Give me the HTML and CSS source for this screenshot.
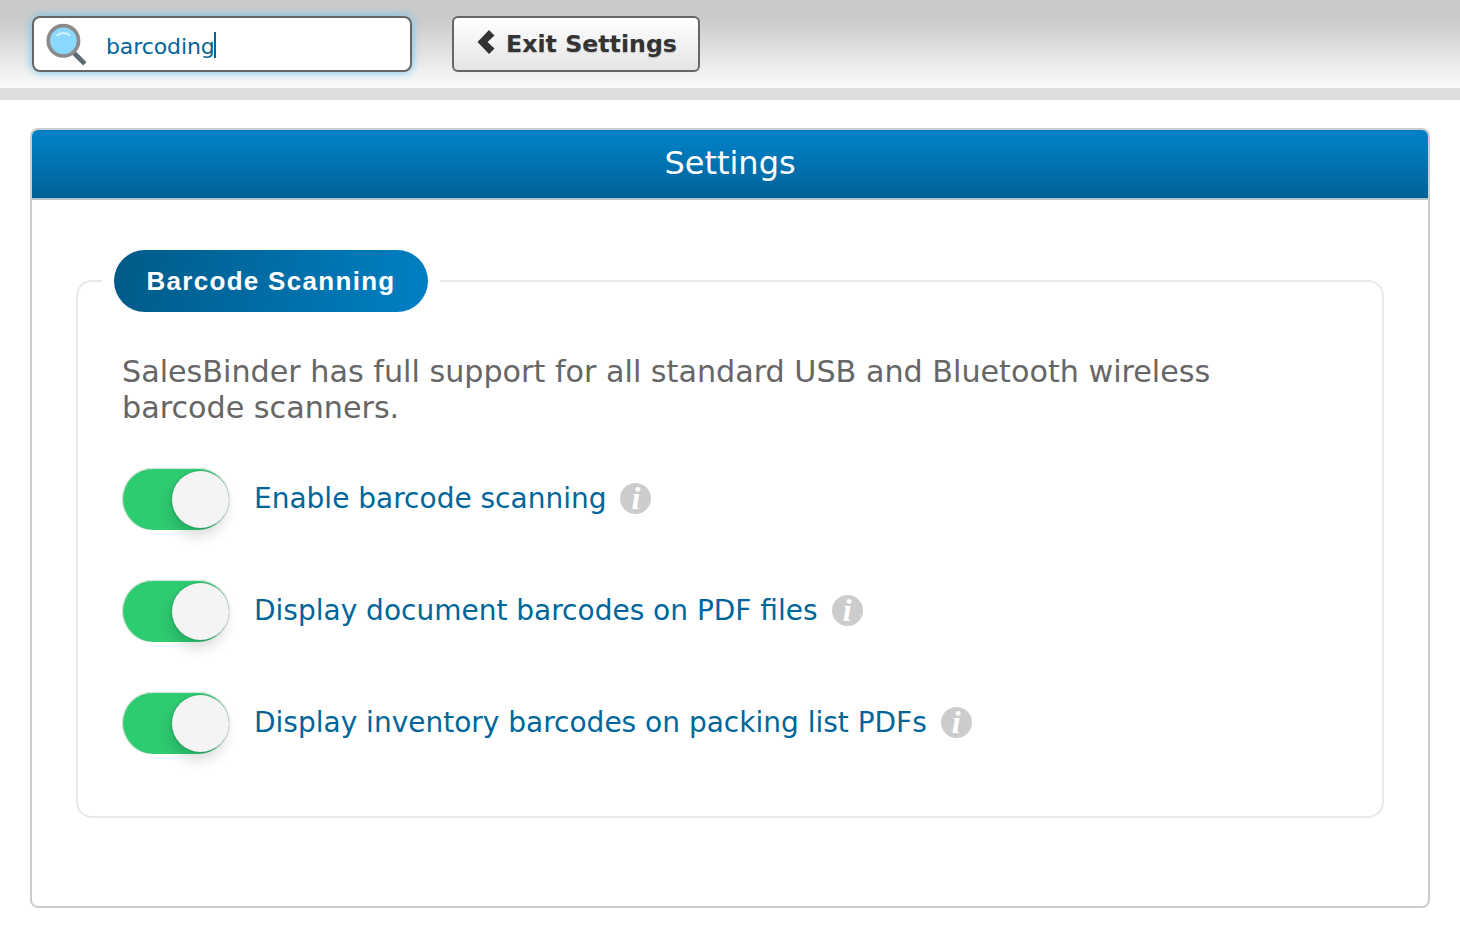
FILE: index.html
```html
<!DOCTYPE html>
<html lang="en">
<head>
<meta charset="utf-8">
<title>Settings</title>
<link rel="stylesheet" href="styles.css">
</head>
<body>
<header class="topbar">
  <div class="search">
    <svg class="search-icon" width="44" height="44" viewBox="0 0 42 42">
      <path d="M27 27 L39 39" stroke="#5b6a70" stroke-width="4.500" fill="none"/>
      <circle cx="18.500" cy="17" r="14.500" fill="#8bd8ff" stroke="#8a8a8a" stroke-width="3.500"/>
      <path d="M12 12 Q18.500 7 25 12" stroke="#d6f1ff" stroke-width="2" fill="none"/>
    </svg>
    <span class="search-text">barcoding</span><span class="caret"></span>
  </div>
  <a class="exit">
    <svg class="chevron" width="18" height="26" viewBox="0 0 18 26"><path d="M12 1 L17.500 6.500 L10.500 13 L17.500 19.500 L12 25 L0.500 13 Z" fill="#333"/></svg>
    <span>Exit Settings</span>
  </a>
</header>
<main class="panel">
  <h1 class="panel-title">Settings</h1>
  <div class="panel-body">
    <fieldset class="group">
      <legend class="group-legend"><span class="pill">Barcode Scanning</span></legend>
      <p class="intro">SalesBinder has full support for all standard USB and Bluetooth wireless barcode scanners.</p>
      <div class="row">
        <span class="toggle"><span class="knob"></span></span>
        <span class="label">Enable barcode scanning</span>
        <span class="info">i</span>
      </div>
      <div class="row">
        <span class="toggle"><span class="knob"></span></span>
        <span class="label">Display document barcodes on PDF files</span>
        <span class="info">i</span>
      </div>
      <div class="row">
        <span class="toggle"><span class="knob"></span></span>
        <span class="label">Display inventory barcodes on packing list PDFs</span>
        <span class="info">i</span>
      </div>
    </fieldset>
  </div>
</main>
</body>
</html>
```
FILE: styles.css
```css
* { box-sizing: border-box; }
html, body { margin: 0; padding: 0; background: #fff; }
body {
  height: 928px;
  overflow: hidden;
  font-family: "DejaVu Sans", Verdana, sans-serif;
}
.topbar {
  height: 100px;
  display: flex;
  gap: 40px;
  padding: 16px 32px 0;
  background: linear-gradient(#c9c9c9 0, #cbcbcb 20px, #fafafa 86px);
  border-bottom: 12px solid #dedede;
}
.search {
  width: 380px;
  height: 56px;
  display: flex;
  align-items: center;
  background: #fff;
  border: 2px solid #666;
  border-radius: 8px;
  box-shadow: 0 0 10px #6cc0ee;
  padding-left: 10px;
}
.search-icon { flex: none; margin-top: 2px; }
.search-text {
  margin-left: 18px;
  margin-top: 4px;
  font-size: 22px;
  letter-spacing: -0.1px;
  color: #006699;
}
.caret { width: 2px; height: 26px; background: #006699; margin-top: 2px; margin-left: -1px; }
.exit {
  width: 248px;
  height: 56px;
  display: flex;
  align-items: center;
  padding: 0 0 0 24px;
  gap: 11px;
  border: 2px solid #666;
  border-radius: 6px;
  background: linear-gradient(#fff, #e4e4e4);
  color: #333;
  font-size: 23.700px;
  font-weight: bold;
  text-shadow: 0 1px 1px rgba(0,0,0,.2);
}
.exit span { margin-top: -1px; }
.chevron { flex: none; margin-top: -5px; margin-left: -1px; }
.panel {
  width: 1400px;
  height: 780px;
  margin: 28px 0 0 30px;
  border: 2px solid #ccc;
  border-radius: 8px;
  overflow: hidden;
}
.panel-title {
  margin: 0;
  height: 70px;
  line-height: 66px;
  text-align: center;
  font-size: 32px;
  font-weight: normal;
  color: #fff;
  background: linear-gradient(#0080c4 0, #0080c4 8px, #006298 68px);
  border-bottom: 2px solid #b4c3cc;
}
.panel-body { padding: 50px 44px 0; }
.group {
  margin: 0;
  height: 568px;
  padding: 0 44px;
  border: 2px solid #e8e8e8;
  border-radius: 16px;
}
.group-legend { margin-left: -20px; padding: 0 12px; }
.pill {
  display: block;
  height: 62px;
  width: 314px;
  line-height: 62px;
  text-align: center;
  border-radius: 31px;
  color: #fff;
  font-family: "Liberation Sans", Arial, sans-serif;
  font-size: 26px;
  letter-spacing: 1.300px;
  font-weight: bold;
  background: linear-gradient(100deg, #005a87, #0080c4);
}
.intro {
  margin: 42px 0 42px;
  max-width: 1190px;
  font-size: 30.200px;
  line-height: 36px;
  color: #666;
}
.row {
  display: flex;
  align-items: center;
  height: 62px;
  margin-bottom: 50px;
}
.toggle {
  position: relative;
  width: 107px;
  height: 62px;
  border-radius: 31px;
  background: #2ecc71;
  box-shadow: inset 0 1px 0 #e2e2e2, inset 1px 0 0 #e8e8e8;
  flex: none;
}
.knob {
  position: absolute;
  top: 3px;
  right: 0;
  width: 57px;
  height: 57px;
  border-radius: 50%;
  background: #f4f4f4;
  box-shadow: 0 0 2px rgba(0,0,0,.35), -3px 8px 14px rgba(0,0,0,.14);
}
.label {
  margin-left: 25px;
  margin-top: -2px;
  font-size: 28px;
  color: #006699;
}
.info {
  width: 31px;
  height: 31px;
  margin-left: 14px;
  margin-top: -2px;
  border-radius: 50%;
  background: #ccc;
  color: #fff;
  text-align: center;
  font-family: "Liberation Serif", serif;
  font-style: italic;
  font-weight: bold;
  font-size: 32px;
  line-height: 31px;
}
```
